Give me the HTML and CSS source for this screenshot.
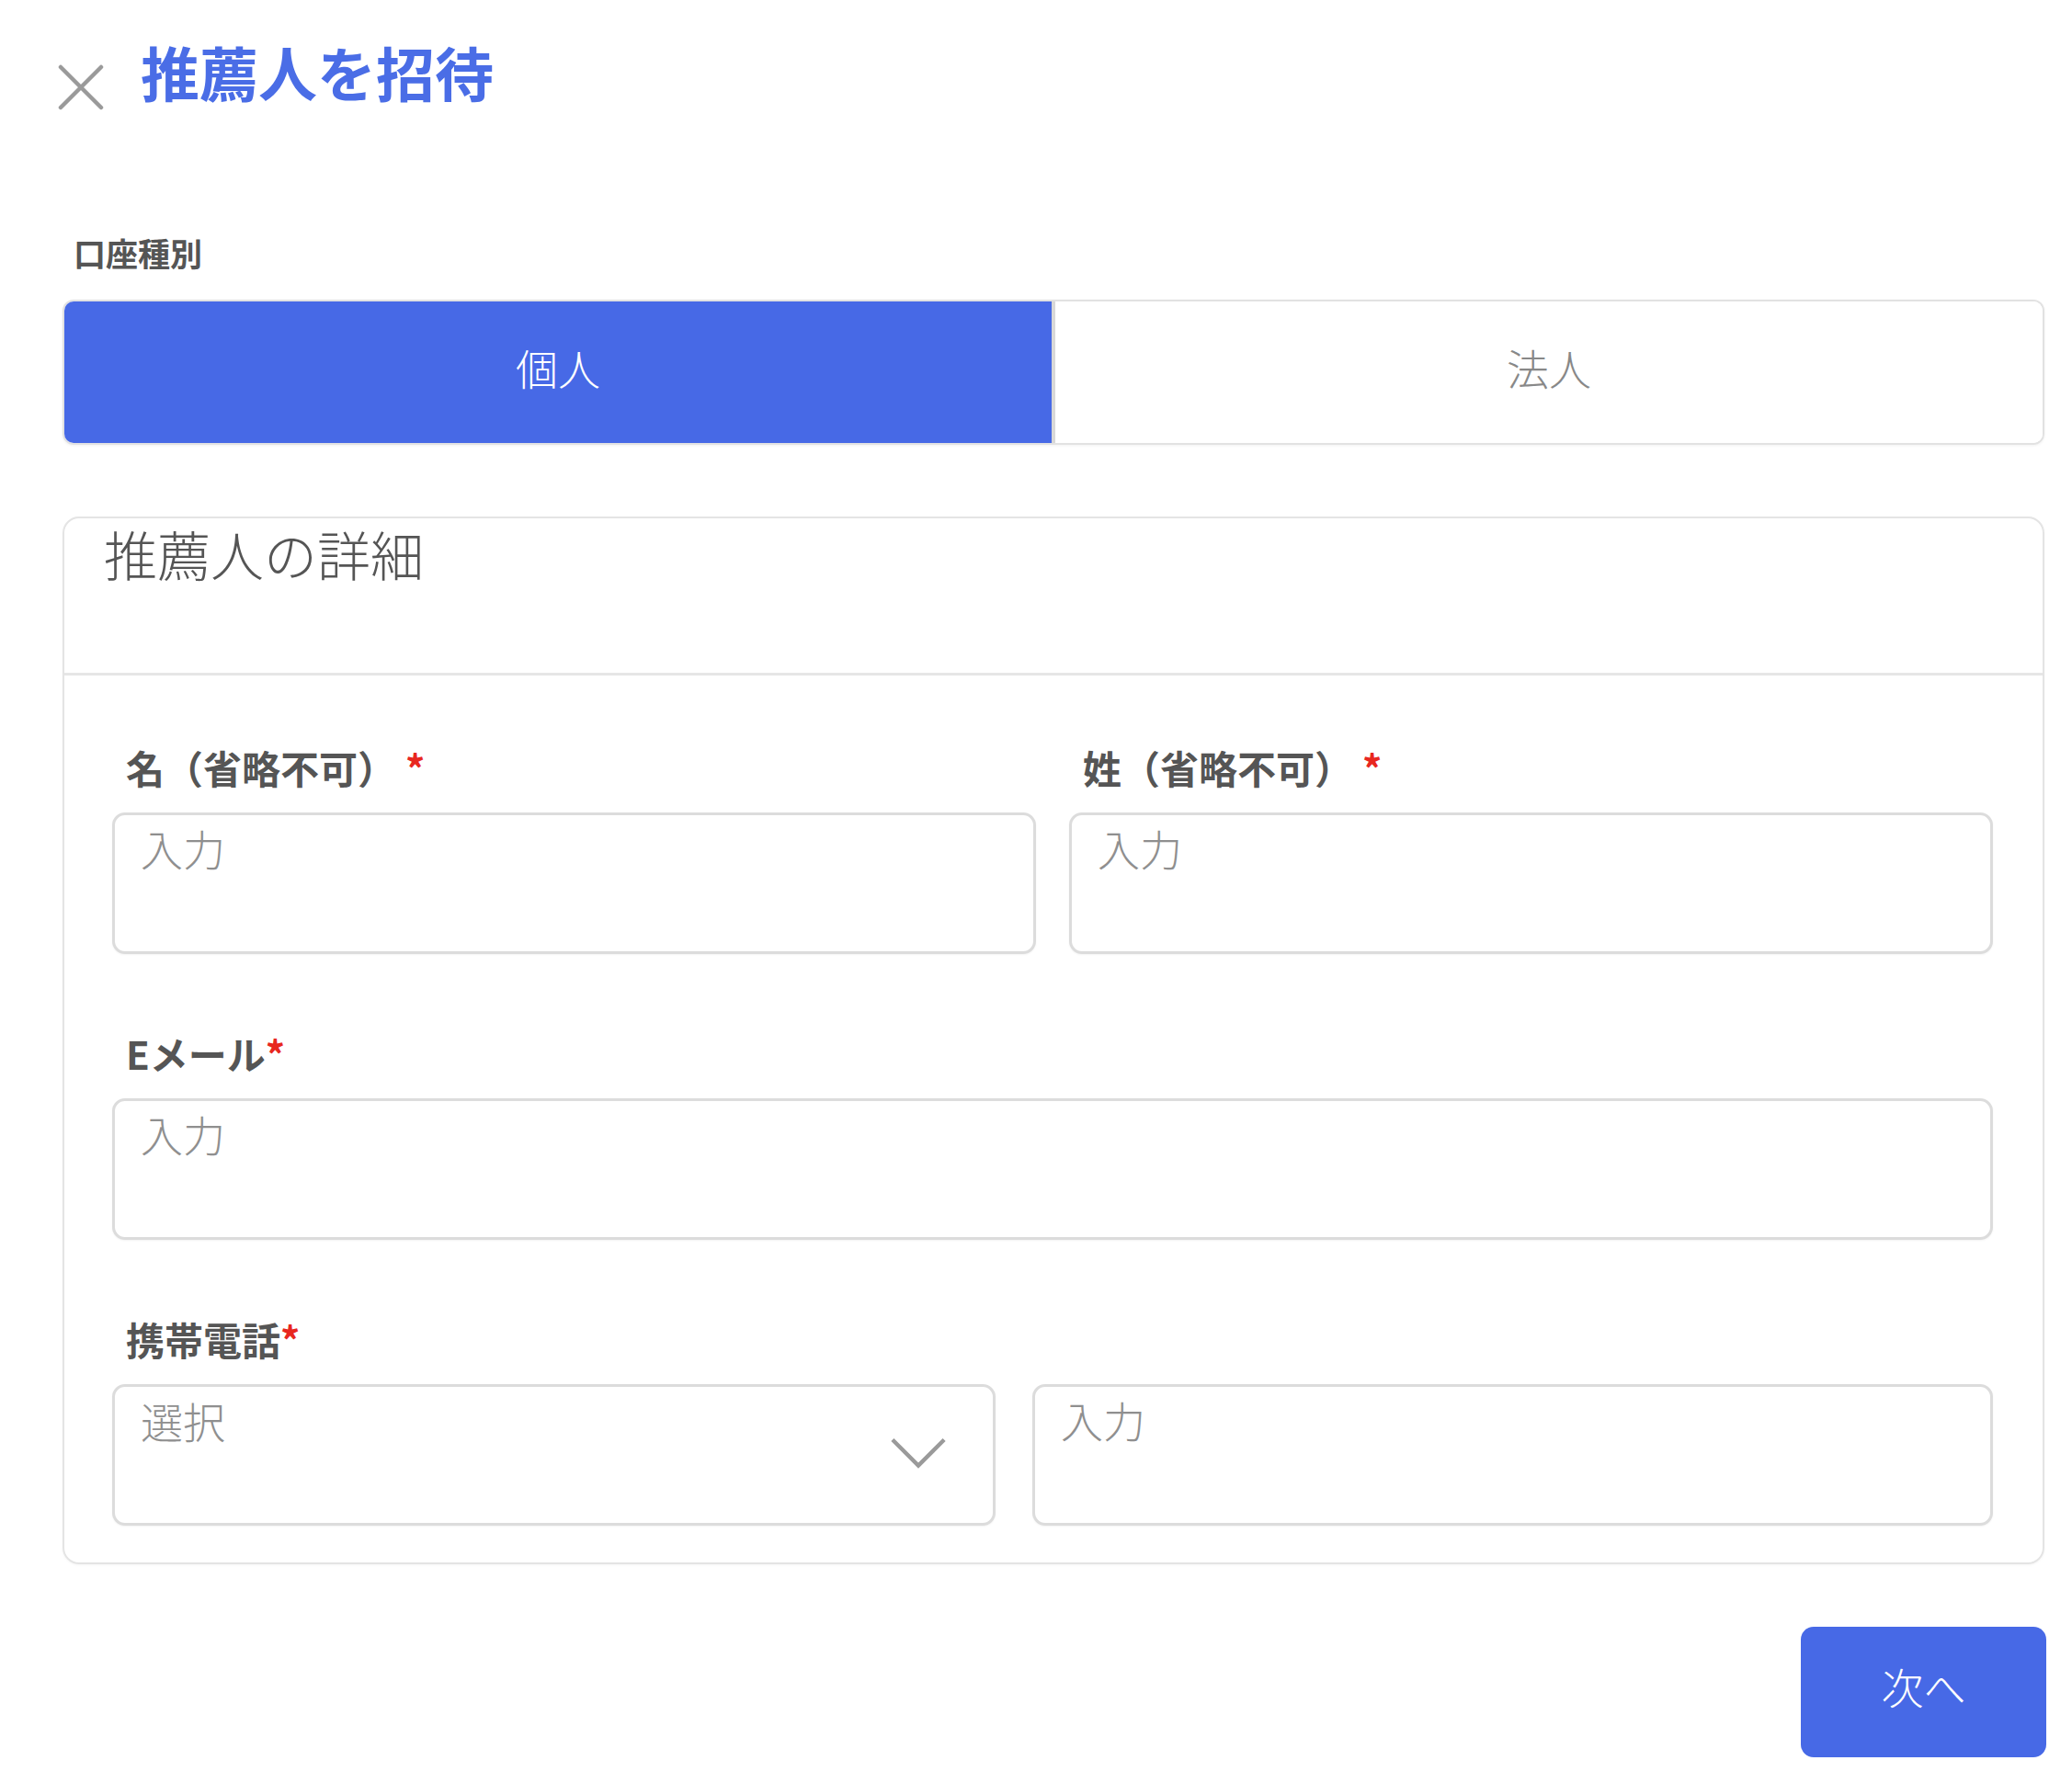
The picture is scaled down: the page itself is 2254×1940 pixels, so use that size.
FILE: index.html
```html
<!DOCTYPE html>
<html lang="ja">
<head>
<meta charset="utf-8">
<title>推薦人を招待</title>
<link rel="stylesheet" href="styles.css">
</head>
<body>
<div class="page">
  <header class="top">
    <button class="close" type="button" aria-label="閉じる">
      <svg width="50" height="50" viewBox="0 0 50 50"><path d="M3 3 L47 47 M47 3 L3 47" stroke="#9a9a9a" stroke-width="4.5" fill="none" stroke-linecap="round"/></svg>
    </button>
    <h1 class="title">推薦人を招待</h1>
  </header>

  <div class="section-label">口座種別</div>
  <div class="toggle">
    <button class="toggle-btn active" type="button">個人</button>
    <button class="toggle-btn" type="button">法人</button>
  </div>

  <section class="card">
    <div class="card-head">推薦人の詳細</div>
    <div class="card-body">
      <div class="row two">
        <div class="field">
          <label class="label">名（省略不可）<span class="req">*</span></label>
          <input class="input" type="text" placeholder="入力">
        </div>
        <div class="field">
          <label class="label">姓（省略不可）<span class="req">*</span></label>
          <input class="input" type="text" placeholder="入力">
        </div>
      </div>
      <div class="field">
        <label class="label">Eメール<span class="req tight">*</span></label>
        <input class="input" type="text" placeholder="入力">
      </div>
      <div class="field">
        <label class="label">携帯電話<span class="req tight">*</span></label>
        <div class="row phone">
          <div class="select">
            <span class="select-text">選択</span>
            <svg class="chev" width="64" height="36" viewBox="0 0 64 36"><path d="M3 3 L32 32 L61 3" stroke="#9a9a9a" stroke-width="4.5" fill="none"/></svg>
          </div>
          <input class="input" type="text" placeholder="入力">
        </div>
      </div>
    </div>
  </section>

  <div class="actions">
    <button class="next" type="button">次へ</button>
  </div>
</div>
</body>
</html>
```

FILE: styles.css
```css
* { box-sizing: border-box; }
html, body {
  margin: 0;
  padding: 0;
  background: #ffffff;
}
body {
  font-family: "Noto Sans CJK JP", "Noto Sans", sans-serif;
  color: #555555;
}
.page {
  padding: 0 30px 0 68px;
  width: 2254px;
}
.top {
  display: flex;
  align-items: flex-start;
  margin-top: 39px;
  margin-left: -5px;
}
.close {
  border: 0;
  background: none;
  padding: 0;
  margin: 31px 40px 0 0;
  width: 50px;
  height: 50px;
  display: block;
  filter: blur(0.6px);
}
.close svg { display: block; }
.title {
  margin: 0;
  font-size: 64px;
  line-height: 77px;
  font-weight: 700;
  color: #4a6de6;
  letter-spacing: 0;
}
.section-label {
  margin-top: 134px;
  margin-left: 12px;
  font-size: 35px;
  line-height: 42px;
  font-weight: 700;
  color: #555555;
}
.toggle {
  margin-top: 30px;
  display: flex;
  height: 158px;
  border: 2px solid #e2e2e2;
  border-radius: 12px;
  overflow: hidden;
  box-shadow: 0 1px 3px rgba(0,0,0,0.06);
}
.toggle-btn {
  flex: 1;
  border: 0;
  background: #ffffff;
  font-family: inherit;
  font-size: 46px;
  font-weight: 300;
  color: #888888;
  padding: 0 0 12px;
}
.toggle-btn.active {
  background: #4769e6;
  color: #ffffff;
  border-right: 4px solid #d8d8d8;
}
.card {
  margin-top: 78px;
  border: 2px solid #e4e4e4;
  border-radius: 18px;
  box-shadow: 0 1px 3px rgba(0,0,0,0.04);
}
.card-head {
  padding: 4px 43px 95px;
  font-size: 58px;
  line-height: 69px;
  font-weight: 300;
  color: #555555;
  border-bottom: 3px solid #e6e6e6;
}
.card-body {
  padding: 76px 54px 40px 52px;
  display: flex;
  flex-direction: column;
  gap: 84px;
}
.row {
  display: grid;
  gap: 36px;
}
.row.two { grid-template-columns: 1fr 1fr; }
.row.phone {
  grid-template-columns: 961fr 1045fr;
  gap: 40px;
}
.field {
  display: flex;
  flex-direction: column;
  gap: 25px;
}
.label {
  display: block;
  padding-left: 15px;
  font-size: 42px;
  line-height: 48px;
  font-weight: 700;
  color: #555555;
}
.req {
  color: #e8271f;
  margin-left: 10px;
}
.req.tight { margin-left: 0; }
.input, .select {
  width: 100%;
  height: 154px;
  border: 3px solid #dcdcdc;
  border-radius: 14px;
  background: #ffffff;
  box-shadow: 0 1px 2px rgba(0,0,0,0.05);
}
.input {
  display: block;
  padding: 10px 28px 88px;
  font-family: inherit;
  font-size: 46px;
  line-height: 53px;
  font-weight: 300;
  color: #555555;
  outline: none;
}
.input::placeholder {
  color: #8f8f8f;
  font-weight: 300;
}
.select {
  display: flex;
  align-items: center;
  justify-content: space-between;
  padding: 0 50px 0 28px;
  position: relative;
}
.select-text {
  align-self: flex-start;
  padding-top: 10px;
  font-size: 46px;
  line-height: 53px;
  font-weight: 300;
  color: #8f8f8f;
}
.chev {
  display: block;
  width: 62px;
  height: 36px;
  margin-top: -4px;
  filter: blur(0.5px);
}
.actions {
  display: flex;
  justify-content: flex-end;
  margin-top: 68px;
  margin-right: -2px;
}
.next {
  width: 267px;
  height: 142px;
  border: 0;
  border-radius: 14px;
  background: #4769e6;
  color: #ffffff;
  font-family: inherit;
  font-size: 46px;
  font-weight: 300;
  padding: 0 0 14px;
}
```
